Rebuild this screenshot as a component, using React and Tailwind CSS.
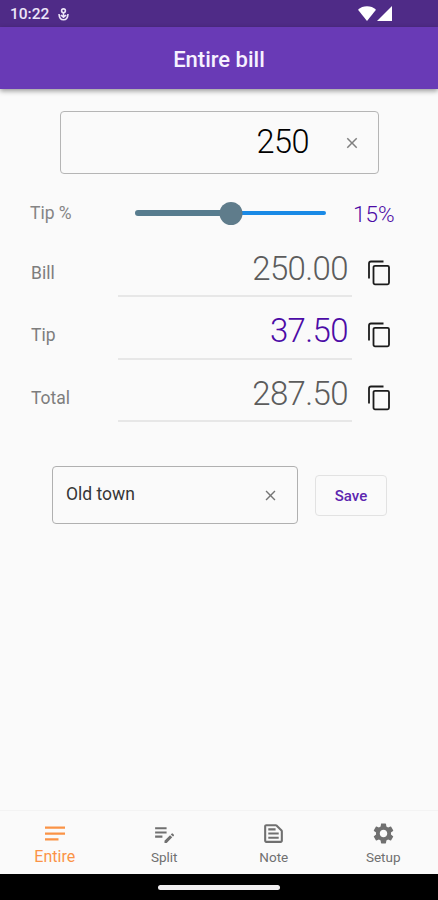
import { useState } from 'react';
import clsx from 'clsx';
import { MdEditNote, MdOutlineTextSnippet, MdSettings, MdClose } from 'react-icons/md';

const LinesIcon = () => (
    <svg width="25" height="25" viewBox="0 0 25 25" fill="currentColor" className="shrink-0">
        <path d="M3 5.500h20v2.200H3zM3 11.500h20v2.200H3zM3 17.300h13.500v2.200H3z" />
    </svg>
);

const CopyIcon = () => (
    <svg width="24" height="26" viewBox="0 0 24 26" fill="none" stroke="currentColor" strokeWidth="1.8">
        <path d="M2 18.500V3.500Q2 1.500 4 1.500H16.500" />
        <rect x="6.500" y="5.800" width="15.500" height="18.500" rx="1.500" />
    </svg>
);

const navItems = [
    { icon: LinesIcon, label: 'Entire' },
    { icon: MdEditNote, label: 'Split' },
    { icon: MdOutlineTextSnippet, label: 'Note' },
    { icon: MdSettings, label: 'Setup' },
];

const format = (value) => value.toFixed(2);

const StatusBar = () => (
    <div className="h-[27px] shrink-0 bg-[#4f2b87] flex items-center pl-[10px] pr-[46px] text-[#ece4f8]">
        <span className="text-[15.500px] font-medium leading-none pt-[3px] w-[48px]">10:22</span>
        <svg width="11" height="13" viewBox="0 0 11 13" fill="none" stroke="currentColor" strokeWidth="1.6" className="mt-px">
            <circle cx="5.500" cy="2.800" r="1.900" />
            <path d="M5.500 4.500v4M1 6c.2 3.600 2 5.800 4.500 5.800S9.800 9.600 10 6M2.800 7l2.700 2.200L8.200 7" />
        </svg>
        <div className="ml-auto flex items-end gap-px text-white">
            <svg width="18" height="15" viewBox="0 0 18 15" fill="currentColor">
                <path d="M0 3.700C2.500 1.400 5.500.3 9 .3s6.500 1.100 9 3.400L9 15z" />
            </svg>
            <svg width="15" height="15" viewBox="0 0 15 15" fill="currentColor">
                <path d="M15 0v15H0z" />
            </svg>
        </div>
    </div>
);

const AmountRow = ({ label, value, highlight }) => (
    <div className="flex h-[62.4px] pl-[31px]">
        <span className="w-[87px] pt-[26px] text-[17.500px] leading-[24px] text-[#7d7d7d]">{label}</span>
        <div
            className={clsx(
                'w-[234px] border-b-2 border-[#e7e7e7] pr-[4px] pt-[14px] text-right text-[33px] leading-[40px] font-light tracking-[-0.6px]',
                highlight ? 'text-[#4c0ba6]' : 'text-[#5c5c5c]'
            )}
        >
            {value}
        </div>
        <button className="ml-[15px] mt-[25px] h-[26px] text-[#1b1b1b]">
            <CopyIcon />
        </button>
    </div>
);

const App = () => {
    const [bill, setBill] = useState('250');
    const [percent, setPercent] = useState(15);
    const [note, setNote] = useState('Old town');
    const [active, setActive] = useState('Entire');

    const amount = Number(bill) || 0;
    const tip = (amount * percent) / 100;

    return (
        <div className="flex h-[900px] w-[438px] flex-col overflow-hidden bg-[#fafafa] font-['Roboto',sans-serif]">
            <StatusBar />
            <header className="relative flex h-[62px] shrink-0 items-center justify-center bg-[#693ab6] pt-[2px] shadow-[0_2px_5px_rgba(0,0,0,0.4)]">
                <h1 className="text-[22px] font-medium text-[#f6f1ff]">Entire bill</h1>
            </header>

            <main className="flex flex-1 flex-col">
                {/* Bill amount */}
                <div className="ml-[60px] mt-[22px] flex h-[63px] w-[319px] items-center rounded-[4px] border-[1.500px] border-[#b5b5b5]">
                    <input
                        value={bill}
                        onChange={(e) => setBill(e.target.value)}
                        className="w-[248px] text-right text-[32.500px] font-light tracking-[-0.5px] text-black outline-none"
                    />
                    <button onClick={() => setBill('')} className="ml-[34px] text-[#808080]">
                        <MdClose size={18} />
                    </button>
                </div>

                {/* Tip percentage */}
                <div className="mt-[22px] flex h-[34px] items-center pl-[30px]">
                    <span className="w-[105px] text-[17.500px] text-[#858585]">Tip %</span>
                    <div className="relative flex h-[24px] w-[191px] items-center">
                        <div className="h-[6px] rounded-l-full bg-[#577c8e]" style={{ width: `${(percent / 30) * 100}%` }} />
                        <div className="h-[4px] flex-1 rounded-r-full bg-[#1a8ae6]" />
                        <div
                            className="absolute h-[23px] w-[23px] -translate-x-1/2 rounded-full bg-[#5f7c8b]"
                            style={{ left: `${(percent / 30) * 100}%` }}
                        />
                        <input
                            type="range"
                            min="0"
                            max="30"
                            value={percent}
                            onChange={(e) => setPercent(Number(e.target.value))}
                            className="absolute inset-0 w-full opacity-0"
                        />
                    </div>
                    <span className="ml-[27px] pt-[3px] text-[22.500px] text-[#4c0ba6] font-light">{percent}%</span>
                </div>

                {/* Totals */}
                <div className="mt-[5px]">
                    <AmountRow label="Bill" value={format(amount)} />
                    <AmountRow label="Tip" value={format(tip)} highlight />
                    <AmountRow label="Total" value={format(amount + tip)} />
                </div>

                <div className="ml-[52px] mt-[44px] flex items-center">
                    <div className="flex h-[58px] w-[246px] items-center rounded-[4px] border-[1.500px] border-[#b0b0b0]">
                        <input
                            value={note}
                            onChange={(e) => setNote(e.target.value)}
                            className="w-[197px] pb-[3px] pl-[13px] text-[17.500px] text-[#363636] outline-none"
                        />
                        <button onClick={() => setNote('')} className="ml-[12px] text-[#757575]">
                            <MdClose size={17} />
                        </button>
                    </div>
                    <button className="ml-[17px] h-[41px] w-[72px] rounded-[4px] border border-[#e2e2e2] pt-[2px] text-[15px] font-medium text-[#5c26b0]">
                        Save
                    </button>
                </div>
            </main>

            <nav className="flex h-[64px] shrink-0 border-t border-[#f3f3f3]">
                {navItems.map((item) => (
                    <button
                        key={item.label}
                        onClick={() => setActive(item.label)}
                        className={clsx(
                            'flex flex-1 flex-col items-center pt-[10px]',
                            active === item.label ? 'text-[#fa9346] text-[16px]' : 'text-[#707070] text-[13.500px]'
                        )}
                    >
                        <item.icon size={25} className="shrink-0" />
                        <span className="pt-px leading-[20px]">{item.label}</span>
                    </button>
                ))}
            </nav>

            <div className="flex h-[26px] shrink-0 items-center justify-center bg-black">
                <div className="h-[5px] w-[122px] rounded-full bg-[#f1eff1]" />
            </div>
        </div>
    );
};

export default App;
